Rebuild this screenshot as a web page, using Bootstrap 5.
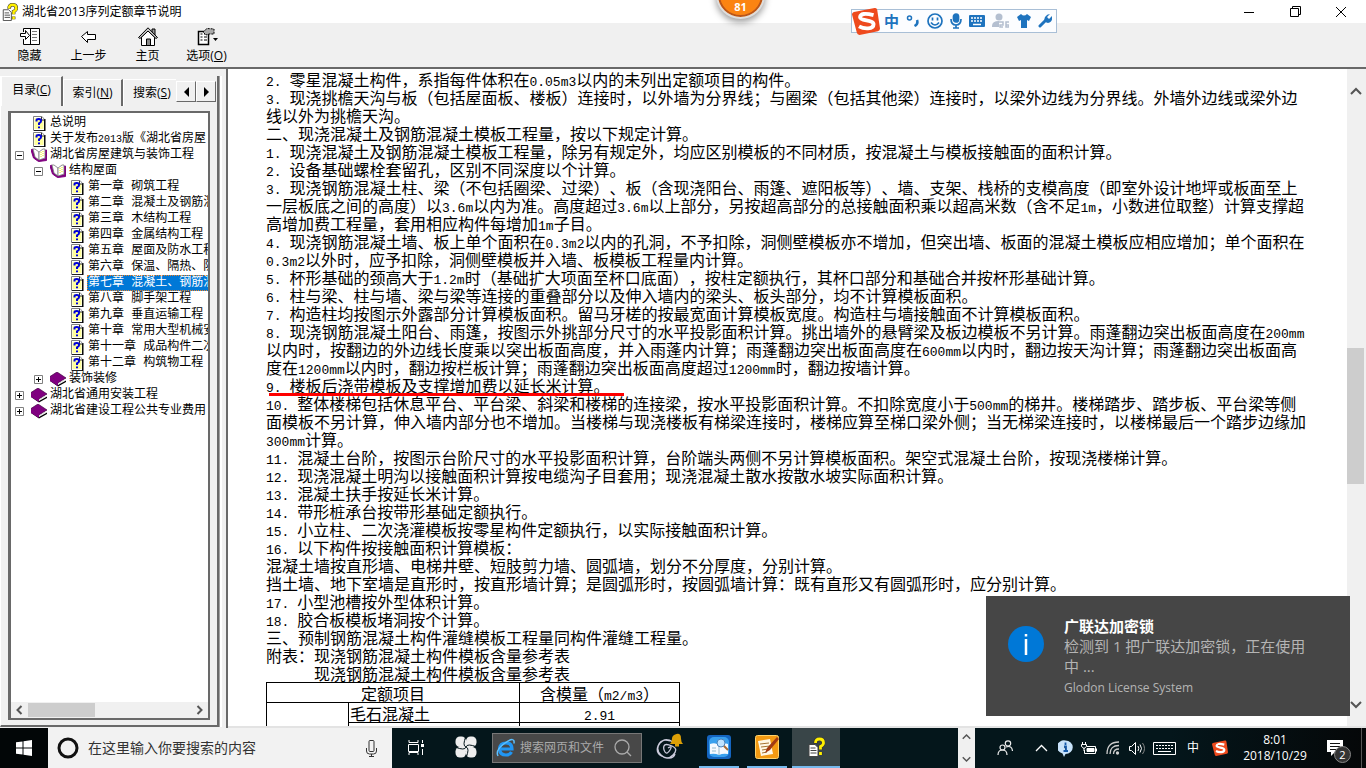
<!DOCTYPE html>
<html lang="zh-CN">
<head>
<meta charset="utf-8">
<meta name="viewport" content="width=device-width, initial-scale=1">
<title>湖北省2013序列定额章节说明</title>
<link href="https://cdn.jsdelivr.net/npm/bootstrap@5.3.0/dist/css/bootstrap.min.css" rel="stylesheet">
<style>
:root{--face:#f0f0f0;--edge:#696969;--ui:"Open Sans","Noto Sans CJK SC",sans-serif;--blue:#1e73be}
body{font:12px/16px var(--ui);color:#000;background:var(--face);text-spacing-trim:space-all}
button{border:0;background:none;padding:0;color:inherit;font:inherit}
svg{display:block;flex:none}
.titlebar{height:23px;background:#fff;padding:0 2px}
.win-ctl{width:46px;height:20px}
.toolbar{height:44px}
.tool{width:59px;gap:1px}
.main-area{border-top:2px solid var(--edge);min-height:0}
/* navigation pane */
.side{width:228px;padding:7px 4px 1px 0;border-right:2px solid var(--edge)}
.tab-frame{border-right:2px solid var(--edge);border-bottom:2px solid var(--edge);border-left:1px solid #fff;width:219px;min-height:0}
.tabs{height:30px}
.tab-btn{height:27px;border-top:1px solid #fff;border-left:1px solid #fff;border-right:2px solid var(--edge)}
.tab-btn.on{height:30px;width:62px}
.tab-2{width:60px}
.tab-3{width:53px;border-right:0;padding-left:9px;text-align:left;white-space:nowrap}
.spin{width:20px;height:21px;border:1px solid #fff;border-right-color:var(--edge);border-bottom-color:var(--edge)}
.tab-page{padding:5px 7px 5px 7px;min-height:0}
.tree-box{background:#fff;border:2px solid var(--edge);border-left-width:3px;min-height:0}
.tree{padding:2px 0 0;font:12px/16px "Liberation Mono","Noto Sans CJK SC",monospace}
.tree .n{font-size:10px;line-height:0}
.tree li{height:16px;white-space:nowrap;padding-left:4px}
.tree li.l2{padding-left:23px}
.tree li.l3{padding-left:42px}
.tree a{color:#000;text-decoration:none;padding-left:1px;margin-left:2px}
.tree a.sel{background:#0078d7;color:#fff;outline:1px dotted #f08020;outline-offset:-1px;flex-grow:1;height:16px}
.box9{width:9px;margin-right:7px}
.hbar{height:16px;background:var(--face)}
.hbar-thumb{width:67px;height:14px;background:#cdcdcd}
.split{width:4px;border-left:1px solid #a0a0a0;background:#fff}
/* document pane */
.doc{background:#fff;padding:1px 0 0 38px;min-width:0;font:16px/18px "Noto Sans CJK SC",sans-serif;white-space:nowrap}
.doc .n{font-family:"Liberation Mono",monospace;font-size:13px;line-height:0}
.doc p{margin:0}
.ind{padding-left:48px}
.redline{position:relative}
.redline::after{content:"";position:absolute;left:3px;width:355px;bottom:-2px;height:3px;background:#f00}
.quota{border-collapse:collapse;width:413px;table-layout:fixed}
.quota td,.quota th{border:1px solid #000;height:20px;padding:0 1px;font-weight:400;line-height:18px}
.c1{width:82px}.c2{width:171px}.c3{width:160px}
.vbar{width:17px;margin-right:2px;background:var(--face)}
.vbar button{height:43px}
.thumb-v{background:#cdcdcd}
.base-line{height:2px;background:#e3e3e3}
/* overlays */
.ball{position:absolute;left:716px;top:-29px;width:49px;height:48px;border-radius:50%;background:#fb8412;border:2px solid #ddd;outline:0;box-shadow:inset 0 0 0 2px #b9551a,0 3px 7px rgba(0,0,0,.4);color:#fff;font-weight:700;font-size:11px;padding-top:24px}
.ime{position:absolute;left:851px;top:9px;width:206px;height:24px;background:#fcfdff;border:1px solid #a9bfd6;color:var(--blue)}
.ime-zh{font-size:15px;font-weight:700}
.notice{position:absolute;right:16px;bottom:52px;width:364px;height:120px;background:#464646;color:#b4b4b4;font-size:15px;line-height:20px;padding:20px 32px 0 22px}
.notice small{font-size:12px}
/* taskbar */
.taskbar{height:40px;background:#04161b;color:#fff}
.w48{width:48px}.w52{width:52px}.w54{width:54px}.w46{width:46px}.w50{width:50px}
.w24{width:24px}.w30{width:30px}.w28{width:28px}.w26{width:26px}.w84{width:84px}.w40{width:40px}
.start{background:#020607}
.cortana{width:344px;background:#f2f2f2;padding:0 14px 0 9px}
.cortana input{border:0;background:none;outline:0;font-size:14px;padding:0 0 0 9px;min-width:0}
.cortana input::placeholder{color:#333;opacity:1}
.websearch{width:150px;height:30px;background:#484848;border:1px solid #777;padding:0 7px 0 3px}
.websearch input{border:0;background:none;outline:0;width:98px;padding:0 0 0 4px;font-size:12px;color:#fff}
.websearch input::placeholder{color:#aaa;opacity:1}
.task{height:40px;border-bottom:2px solid transparent;position:relative}
.run::after{content:"";position:absolute;left:3px;right:3px;bottom:-2px;height:2px;background:#76b9ed}
.run.w50::after{left:5px;right:5px}
.run.active-app{background:#394548}
.run.active-app::after{left:0;right:0}
.taskscroll{width:17px;background:var(--face)}
.tray{padding:0 4px 0 6px;background:linear-gradient(90deg,#04161b 50%,#050708)}
.peek{border-left:1px solid #555;height:40px}
.count{position:absolute;left:17px;top:18px;width:17px;height:17px;border-radius:50%;background:#333;border:1px solid #888;font-size:11px;line-height:15px}
</style>
</head>
<body class="vh-100 d-flex flex-column overflow-hidden position-relative">

<svg width="0" height="0" class="position-absolute" aria-hidden="true">
  <symbol id="help" viewBox="0 0 13 15"><path d="M1 .5h8.500l2.500 3v11H1z" fill="#fff" stroke="#808080"/><path d="M2 2h7v2h2v9H2z" fill="#ffff9c"/><path d="M12.300 3v12H1.500" fill="none" stroke="#000" stroke-width="1.400"/><path d="M9 1v3h3" fill="#fff" stroke="#000" stroke-width=".8"/><path d="M4 5.500V4.300Q4 3 6.300 3T8.600 5Q8.600 6.200 6.500 7.300V9M6.500 10.500v1.800" fill="none" stroke="#00d" stroke-width="2"/></symbol>
  <symbol id="open" viewBox="0 0 16 14"><path d="M0 2l2.500 8 5 3.500 8-1V2h-1v8.500l-6 1.500-4-3L1.500 1z" fill="#800080" stroke="#800080"/><path d="M2 1h2l4 3v8L4 9z" fill="#fff" stroke="#777" stroke-width=".8"/><path d="M8 4l4-3h2v9l-6 2z" fill="#fff" stroke="#777" stroke-width=".8"/><path d="M10 4v6M12 3v6" stroke="#ee0" stroke-dasharray="1"/></symbol>
  <symbol id="book" viewBox="0 0 16 15"><path d="M0 4.500L7 0l9 6-8 5z" fill="#800080" stroke="#400040" stroke-width=".7"/><path d="M0 5v4l8 5.500 8-4.500V8.500L8 13z" fill="#000"/><path d="M8 12l7-4.500" fill="none" stroke="#ddd"/><path d="M0 4.500L8 10v4L0 9z" fill="#800080"/></symbol>
  <symbol id="minus" viewBox="0 0 9 9"><path d="M.5.5h8v8h-8z" fill="#fff" stroke="#808080"/><path d="M2 4.500h5" stroke="#000"/></symbol>
  <symbol id="plus" viewBox="0 0 9 9"><path d="M.5.5h8v8h-8z" fill="#fff" stroke="#808080"/><path d="M2 4.500h5M4.500 2v5" stroke="#000"/></symbol>
  <symbol id="chm" viewBox="0 0 16 20"><path d="M.5 7.500h6l3 3v9h-9z" fill="#fff" stroke="#444"/><path d="M2 11h5M2 13.500h6M2 16h6" stroke="#444"/><path d="M7 6.500Q7 2 11 2t4 4Q15 8 12 9.500v3M12 15v3" fill="none" stroke="#333" stroke-width="4"/><path d="M7 6Q7 2 11 2t4 4Q15 8 12 9.500v3M12 15v3" fill="none" stroke="#ffef00" stroke-width="2.800"/></symbol>
  <symbol id="sogou" viewBox="0 0 26 26"><path d="M3 4.500L21 1q2-.3 2.400 1.500L26 20q0 2-2 2.500L7 26q-2 0-2.500-2L0 7q0-2 3-2.500z" fill="#ee4a1d"/><path d="M20 7.500Q8 4.500 7.500 9.500c0 3.500 12.500 2.500 12.500 6.500 0 5-9 4.500-13.500 2" fill="none" stroke="#fff" stroke-width="3.600"/></symbol>
  <symbol id="up" viewBox="0 0 12 8"><path d="M1 7l5-5 5 5" fill="none" stroke="#555" stroke-width="2"/></symbol>
  <symbol id="down" viewBox="0 0 12 8"><path d="M1 1l5 5 5-5" fill="none" stroke="#555" stroke-width="2"/></symbol>
</svg>

<header class="titlebar d-flex align-items-center flex-shrink-0">
  <svg width="16" height="18"><use href="#chm"/></svg>
  <span class="ps-1">湖北省2013序列定额章节说明</span>
  <div class="ms-auto d-flex">
    <button class="win-ctl d-flex justify-content-center align-items-center" aria-label="最小化"><svg width="10" height="10"><path d="M0 5.500h10" stroke="#000"/></svg></button>
    <button class="win-ctl d-flex justify-content-center align-items-center" aria-label="还原"><svg width="11" height="11" fill="none" stroke="#000"><path d="M.5 2.500h8v8h-8zM2.500 2.500v-2h8v8h-2"/></svg></button>
    <button class="win-ctl d-flex justify-content-center align-items-center" aria-label="关闭"><svg width="10" height="10" stroke="#000"><path d="M0 0l10 10M10 0L0 10"/></svg></button>
  </div>
</header>

<nav class="toolbar d-flex flex-shrink-0">
  <button class="tool d-flex flex-column align-items-center pt-1"><svg width="20" height="20" fill="#fff" stroke="#000"><path d="M3.500 5V1.500h16v16h-16V12"/><path d="M10.500 2v15"/><path d="M12 4.500h5M12 7.500h5M12 10.500h5M12 13.500h5" stroke="#777"/><path d="M.5 6.500h5v-3l4 5-4 4v-3h-5z"/></svg>隐藏</button>
  <button class="tool d-flex flex-column align-items-center pt-1"><svg width="20" height="20" fill="#fff" stroke="#000"><path d="M2.500 9.500l6-5v3h8v5h-8v3z"/></svg>上一步</button>
  <button class="tool d-flex flex-column align-items-center pt-1"><svg width="20" height="20" fill="#fff" stroke="#000"><path d="M3.500 10v8.500h13V10L10 4z"/><path d="M14 2h3v7l-3-3z" fill="#999"/><path d="M.5 10.500L10 .8l9.500 9.700-1.500 1L10 4l-8 7.500z" fill="#ccc"/><path d="M8.500 18v-6h4v6" fill="#888"/></svg>主页</button>
  <button class="tool d-flex flex-column align-items-center pt-1"><svg width="22" height="20" fill="#fff" stroke="#000"><path d="M2.500 4.500h10v13h-10z" stroke-width="1.500"/><path d="M4.500 7h2M8 7h3M4.500 10h2M8 10h3M4.500 13h2M8 13h3"/><path d="M7 5l4-3.500 7 .5v5h-5l-3 1z" fill="#aaa" stroke-dasharray="2 1"/><path d="M17 11h5l-2.500 3z" fill="#000" stroke="none"/></svg><span>选项(<u>O</u>)</span></button>
</nav>

<main class="main-area d-flex flex-grow-1">
  <aside class="side d-flex flex-shrink-0">
    <div class="tab-frame d-flex flex-column flex-shrink-0">
      <div class="tabs d-flex align-items-end flex-shrink-0" role="tablist">
        <button class="tab-btn on pb-1" role="tab" aria-selected="true">目录(<u>C</u>)</button>
        <button class="tab-btn tab-2" role="tab">索引(<u>N</u>)</button>
        <button class="tab-btn tab-3" role="tab">搜索(<u>S</u>)</button>
        <button class="spin d-flex align-items-center justify-content-center mb-1" aria-label="向左"><svg width="5" height="10"><path d="M5 0v10L0 5z"/></svg></button>
        <button class="spin d-flex align-items-center justify-content-center mb-1" aria-label="向右"><svg width="5" height="10"><path d="M0 0v10l5-5z"/></svg></button>
      </div>
      <div class="tab-page d-flex flex-grow-1">
        <div class="tree-box d-flex flex-column flex-grow-1 overflow-hidden">
          <ul class="tree list-unstyled m-0 flex-grow-1 overflow-hidden">
            <li class="d-flex align-items-center"><span class="box9"></span><svg width="16" height="15"><use href="#help"/></svg><a href="#">总说明</a></li>
            <li class="d-flex align-items-center"><span class="box9"></span><svg width="16" height="15"><use href="#help"/></svg><a href="#">关于发布<span class="n">2013</span>版《湖北省房屋</a></li>
            <li class="d-flex align-items-center"><svg class="box9" height="9"><use href="#minus"/></svg><svg width="16" height="14"><use href="#open"/></svg><a href="#">湖北省房屋建筑与装饰工程</a></li>
            <li class="l2 d-flex align-items-center"><svg class="box9" height="9"><use href="#minus"/></svg><svg width="16" height="14"><use href="#open"/></svg><a href="#">结构屋面</a></li>
            <li class="l3 d-flex align-items-center"><span class="box9 flex-shrink-0"></span><svg width="16" height="15"><use href="#help"/></svg><a href="#">第一章 砌筑工程</a></li>
            <li class="l3 d-flex align-items-center"><span class="box9 flex-shrink-0"></span><svg width="16" height="15"><use href="#help"/></svg><a href="#">第二章 混凝土及钢筋混</a></li>
            <li class="l3 d-flex align-items-center"><span class="box9 flex-shrink-0"></span><svg width="16" height="15"><use href="#help"/></svg><a href="#">第三章 木结构工程</a></li>
            <li class="l3 d-flex align-items-center"><span class="box9 flex-shrink-0"></span><svg width="16" height="15"><use href="#help"/></svg><a href="#">第四章 金属结构工程</a></li>
            <li class="l3 d-flex align-items-center"><span class="box9 flex-shrink-0"></span><svg width="16" height="15"><use href="#help"/></svg><a href="#">第五章 屋面及防水工程</a></li>
            <li class="l3 d-flex align-items-center"><span class="box9 flex-shrink-0"></span><svg width="16" height="15"><use href="#help"/></svg><a href="#">第六章 保温、隔热、防</a></li>
            <li class="l3 d-flex align-items-center"><span class="box9 flex-shrink-0"></span><svg width="16" height="15"><use href="#help"/></svg><a href="#" class="sel">第七章 混凝土、钢筋混</a></li>
            <li class="l3 d-flex align-items-center"><span class="box9 flex-shrink-0"></span><svg width="16" height="15"><use href="#help"/></svg><a href="#">第八章 脚手架工程</a></li>
            <li class="l3 d-flex align-items-center"><span class="box9 flex-shrink-0"></span><svg width="16" height="15"><use href="#help"/></svg><a href="#">第九章 垂直运输工程</a></li>
            <li class="l3 d-flex align-items-center"><span class="box9 flex-shrink-0"></span><svg width="16" height="15"><use href="#help"/></svg><a href="#">第十章 常用大型机械安</a></li>
            <li class="l3 d-flex align-items-center"><span class="box9 flex-shrink-0"></span><svg width="16" height="15"><use href="#help"/></svg><a href="#">第十一章 成品构件二次</a></li>
            <li class="l3 d-flex align-items-center"><span class="box9 flex-shrink-0"></span><svg width="16" height="15"><use href="#help"/></svg><a href="#">第十二章 构筑物工程</a></li>
            <li class="l2 d-flex align-items-center"><svg class="box9" height="9"><use href="#plus"/></svg><svg width="16" height="15"><use href="#book"/></svg><a href="#">装饰装修</a></li>
            <li class="d-flex align-items-center"><svg class="box9" height="9"><use href="#plus"/></svg><svg width="16" height="15"><use href="#book"/></svg><a href="#">湖北省通用安装工程</a></li>
            <li class="d-flex align-items-center"><svg class="box9" height="9"><use href="#plus"/></svg><svg width="16" height="15"><use href="#book"/></svg><a href="#">湖北省建设工程公共专业费用</a></li>
          </ul>
          <div class="hbar d-flex align-items-center flex-shrink-0">
            <button class="px-1" aria-label="向左滚动"><svg width="9" height="10"><path d="M6.500 1l-4 4 4 4" fill="none" stroke="#555" stroke-width="2"/></svg></button>
            <div class="hbar-thumb"></div>
            <button class="px-1 ms-auto" aria-label="向右滚动"><svg width="9" height="10"><path d="M2.500 1l4 4-4 4" fill="none" stroke="#555" stroke-width="2"/></svg></button>
          </div>
        </div>
      </div>
    </div>
    <div class="split ms-auto"></div>
  </aside>

  <div class="d-flex flex-column flex-grow-1 overflow-hidden">
    <div class="d-flex flex-grow-1 overflow-hidden">
      <article class="doc flex-grow-1 overflow-hidden">
        <p><span class="n">2. </span>零星混凝土构件，系指每件体积在<span class="n">0.05m3</span>以内的未列出定额项目的构件。</p>
        <p><span class="n">3. </span>现浇挑檐天沟与板（包括屋面板、楼板）连接时，以外墙为分界线；与圈梁（包括其他梁）连接时，以梁外边线为分界线。外墙外边线或梁外边<br>线以外为挑檐天沟。</p>
        <p>二、现浇混凝土及钢筋混凝土模板工程量，按以下规定计算。</p>
        <p><span class="n">1. </span>现浇混凝土及钢筋混凝土模板工程量，除另有规定外，均应区别模板的不同材质，按混凝土与模板接触面的面积计算。</p>
        <p><span class="n">2. </span>设备基础螺栓套留孔，区别不同深度以个计算。</p>
        <p><span class="n">3. </span>现浇钢筋混凝土柱、梁（不包括圈梁、过梁）、板（含现浇阳台、雨篷、遮阳板等）、墙、支架、栈桥的支模高度（即室外设计地坪或板面至上<br>一层板底之间的高度）以<span class="n">3.6m</span>以内为准。高度超过<span class="n">3.6m</span>以上部分，另按超高部分的总接触面积乘以超高米数（含不足<span class="n">1m</span>，小数进位取整）计算支撑超<br>高增加费工程量，套用相应构件每增加<span class="n">1m</span>子目。</p>
        <p><span class="n">4. </span>现浇钢筋混凝土墙、板上单个面积在<span class="n">0.3m2</span>以内的孔洞，不予扣除，洞侧壁模板亦不增加，但突出墙、板面的混凝土模板应相应增加；单个面积在<br><span class="n">0.3m2</span>以外时，应予扣除，洞侧壁模板并入墙、板模板工程量内计算。</p>
        <p><span class="n">5. </span>杯形基础的颈高大于<span class="n">1.2m</span>时（基础扩大项面至杯口底面），按柱定额执行，其杯口部分和基础合并按杯形基础计算。</p>
        <p><span class="n">6. </span>柱与梁、柱与墙、梁与梁等连接的重叠部分以及伸入墙内的梁头、板头部分，均不计算模板面积。</p>
        <p><span class="n">7. </span>构造柱均按图示外露部分计算模板面积。留马牙槎的按最宽面计算模板宽度。构造柱与墙接触面不计算模板面积。</p>
        <p><span class="n">8. </span>现浇钢筋混凝土阳台、雨篷，按图示外挑部分尺寸的水平投影面积计算。挑出墙外的悬臂梁及板边模板不另计算。雨蓬翻边突出板面高度在<span class="n">200mm</span><br>以内时，按翻边的外边线长度乘以突出板面高度，并入雨蓬内计算；雨蓬翻边突出板面高度在<span class="n">600mm</span>以内时，翻边按天沟计算；雨蓬翻边突出板面高<br>度在<span class="n">1200mm</span>以内时，翻边按栏板计算；雨蓬翻边突出板面高度超过<span class="n">1200mm</span>时，翻边按墙计算。</p>
        <p class="redline"><span class="n">9. </span>楼板后浇带模板及支撑增加费以延长米计算。</p>
        <p><span class="n">10. </span>整体楼梯包括休息平台、平台梁、斜梁和楼梯的连接梁，按水平投影面积计算。不扣除宽度小于<span class="n">500mm</span>的梯井。楼梯踏步、踏步板、平台梁等侧<br>面模板不另计算，伸入墙内部分也不增加。当楼梯与现浇楼板有梯梁连接时，楼梯应算至梯口梁外侧；当无梯梁连接时，以楼梯最后一个踏步边缘加<br><span class="n">300mm</span>计算。</p>
        <p><span class="n">11. </span>混凝土台阶，按图示台阶尺寸的水平投影面积计算，台阶端头两侧不另计算模板面积。架空式混凝土台阶，按现浇楼梯计算。</p>
        <p><span class="n">12. </span>现浇混凝土明沟以接触面积计算按电缆沟子目套用；现浇混凝土散水按散水坡实际面积计算。</p>
        <p><span class="n">13. </span>混凝土扶手按延长米计算。</p>
        <p><span class="n">14. </span>带形桩承台按带形基础定额执行。</p>
        <p><span class="n">15. </span>小立柱、二次浇灌模板按零星构件定额执行，以实际接触面积计算。</p>
        <p><span class="n">16. </span>以下构件按接触面积计算模板：</p>
        <p>混凝土墙按直形墙、电梯井壁、短肢剪力墙、圆弧墙，划分不分厚度，分别计算。</p>
        <p>挡土墙、地下室墙是直形时，按直形墙计算；是圆弧形时，按圆弧墙计算：既有直形又有圆弧形时，应分别计算。</p>
        <p><span class="n">17. </span>小型池槽按外型体积计算。</p>
        <p><span class="n">18. </span>胶合板模板堵洞按个计算。</p>
        <p>三、预制钢筋混凝土构件灌缝模板工程量同构件灌缝工程量。</p>
        <p>附表：现浇钢筋混凝土构件模板含量参考表</p>
        <p class="ind">现浇钢筋混凝土构件模板含量参考表</p>
        <table class="quota">
          <colgroup><col class="c1"><col class="c2"><col class="c3"></colgroup>
          <tr><th colspan="2" class="text-center">定额项目</th><th class="text-center">含模量（<span class="n">m2/m3</span>）</th></tr>
          <tr><td rowspan="2"></td><td>毛石混凝土</td><td class="text-center"><span class="n">2.91</span></td></tr>
          <tr><td>无筋混凝土</td><td></td></tr>
        </table>
      </article>
      <div class="vbar d-flex flex-column flex-shrink-0">
        <button class="d-flex justify-content-center align-items-center" aria-label="向上滚动"><svg width="12" height="8"><use href="#up"/></svg></button>
        <div style="flex:236"></div><div class="thumb-v" style="flex:136"></div><div style="flex:199"></div>
        <button class="d-flex justify-content-center align-items-center" aria-label="向下滚动"><svg width="12" height="8"><use href="#down"/></svg></button>
      </div>
    </div>
    <div class="base-line flex-shrink-0"></div>
  </div>
</main>

<footer class="taskbar d-flex flex-shrink-0">
  <button class="start w48 d-flex align-items-center justify-content-center" aria-label="开始"><svg width="16" height="16" fill="#fff"><path d="M0 2.300L6.500 1.400v6.100H0zM7.500 1.200L16 0v7.500H7.500zM0 8.500h6.500v6.100L0 13.700zM7.500 8.500H16V16l-8.500-1.200z"/></svg></button>
  <div class="cortana d-flex align-items-center">
    <svg width="22" height="22"><circle cx="11" cy="11" r="9" fill="none" stroke="#111" stroke-width="3"/></svg>
    <input class="flex-grow-1" type="text" aria-label="搜索" placeholder="在这里输入你要搜索的内容">
    <svg width="13" height="17" fill="none" stroke="#333"><rect x="4" y=".5" width="5" height="11" rx="1"/><path d="M1.500 8v3q0 3 3 3h4q3 0 3-3V8M6.500 14v2.500M4 16.500h5"/></svg>
  </div>
  <div class="d-flex align-items-center flex-grow-1">
    <button class="task w48 d-flex align-items-center justify-content-center" aria-label="任务视图"><svg width="17" height="15" fill="none" stroke="#fff"><path d="M.5 4.500h10v7H.5zM1 0v2.500h9V0M1 15v-2.500h9V15M14.500 0v3M14.500 9v6"/><path d="M13 4h3v3h-3z" fill="#fff" stroke="none"/></svg></button>
    <button class="task w52 d-flex align-items-center justify-content-center" aria-label="风扇"><svg width="22" height="22"><g fill="#eee"><rect x=".5" y=".5" width="10.500" height="10.500" rx="4.500"/><rect x="11" y=".5" width="10.500" height="10.500" rx="4.500"/><rect x=".5" y="11" width="10.500" height="10.500" rx="4.500"/><rect x="11" y="11" width="10.500" height="10.500" rx="4.500"/><rect x="7" y="7" width="8" height="8"/></g><path d="M11 11Q7 10 11 0M11 11Q12 7 22 11M11 11Q15 12 11 22M11 11Q10 15 0 11" fill="none" stroke="#04161b"/></svg></button>
    <div class="websearch d-flex align-items-center flex-shrink-0">
      <svg width="20" height="20"><path d="M3.500 11h12.500Q16 5 10 5T3.500 11Q4 17 10 17q4 0 5.500-3" fill="none" stroke="#2196f3" stroke-width="3.200"/><path d="M2 18Q-1 12 9 5t9 .5" fill="none" stroke="#5cc0ff" stroke-width="1.500"/></svg>
      <input type="text" aria-label="搜索网页和文件" placeholder="搜索网页和文件">
      <svg width="18" height="18" fill="none" stroke="#aaa" stroke-width="1.300"><circle cx="8" cy="8" r="7"/><path d="M13 13l4 4"/></svg>
    </div>
    <button class="task w54 d-flex align-items-center justify-content-center" aria-label="浏览器"><svg width="27" height="28"><path d="M17 9Q9 4 4 10T5 22t12 0-1-9-8 0 1 6 5-2-2-2M14 8Q5 5 2 13t6 11 11-3" fill="none" stroke="#ccd" stroke-width="1.300"/><path d="M14 11q2-2 2-5.500T20.500 1 25 5.500q0 3.500 2 5.500zM19 11h4v2.500h-4z" fill="#dda007"/></svg></button>
    <button class="task run w46 d-flex align-items-center justify-content-center" aria-label="阅读器"><svg width="24" height="24"><rect width="24" height="24" rx="3" fill="#1565c0"/><rect x="2" y="2" width="20" height="20" rx="5" fill="#39a0ee"/><path d="M3 9q5-2 9 1 4-3 9-1v10q-5-1-9 1-4-2-9-1z" fill="#f5f9ff"/><path d="M12 10v10M5 13h4M5 16h4" stroke="#9bc"/><circle cx="14" cy="8" r="4" fill="#bfe3ff" stroke="#4b83bb"/><path d="M17 11l4 4" stroke="#a76b35" stroke-width="2"/></svg></button>
    <button class="task run w50 d-flex align-items-center justify-content-center" aria-label="记事"><svg width="24" height="24"><rect x=".5" y=".5" width="23" height="23" rx="2" fill="#f39a12" stroke="#ffd36b"/><path d="M3 6l12-2 3 15-12 2z" fill="#fff8e6"/><path d="M5 9l9-1M6 12l9-1M7 15l6-1M7 18l5-1" stroke="#a67434"/><path d="M22 2L12 13l-2 5 5-3L24 4z" fill="#a23b12"/></svg></button>
    <button class="task run active-app w48 d-flex align-items-center justify-content-center" aria-label="帮助"><svg width="17" height="20"><use href="#chm"/></svg></button>
  </div>
  <div class="taskscroll d-flex flex-column align-items-center justify-content-between py-1 flex-shrink-0">
    <button aria-label="上一行"><svg width="9" height="9"><use href="#up"/></svg></button>
    <button aria-label="下一行"><svg width="9" height="9"><use href="#down"/></svg></button>
  </div>
  <div class="tray d-flex align-items-center flex-shrink-0">
    <button class="w48 d-flex justify-content-center" aria-label="人脉"><svg width="16" height="16" fill="none" stroke="#eee" stroke-width="1.200"><circle cx="5.500" cy="7.500" r="2.500"/><path d="M1 15q0-5 4.500-5t4.500 5"/><circle cx="11" cy="3.500" r="2.700"/><path d="M9 7q6-2 6.500 4"/></svg></button>
    <button class="w24 d-flex justify-content-center" aria-label="显示隐藏的图标"><svg width="13" height="8" fill="none" stroke="#fff" stroke-width="1.300"><path d="M1 7l5.500-5.500L12 7"/></svg></button>
    <button class="w24 d-flex justify-content-center" aria-label="信息"><svg width="15" height="17"><path d="M7.500.5a7 6.500 0 1 1 0 13.500L6 17l-1.500-3.500A7 6.500 0 0 1 7.500.5z" fill="#c8e2fa"/><path d="M7.500 2.500v2.500M6 6.500h2v4.500M5.500 11h4.500" stroke="#1458a8" stroke-width="1.800"/></svg></button>
    <button class="w24 d-flex justify-content-center" aria-label="电池"><svg width="17" height="13" fill="none" stroke="#fff"><path d="M6 4.500h8.500v7h-11V8M15.500 6.500v3"/><path d="M6 6.500h7v3H6z" fill="#fff"/><path d="M.5 2.500h5v2l-2.500 2-2.500-2zM1.500 0v2M4.500 0v2M3 6v3"/></svg></button>
    <button class="w24 d-flex justify-content-center" aria-label="网络"><svg width="14" height="14" fill="none" stroke="#ccc" stroke-width="1.300"><path d="M1 13Q1 1 13 1M4 13q0-8.500 9-8.500M7.500 13q0-5 5.500-5"/><circle cx="11.500" cy="12" r="1" fill="#fff"/></svg></button>
    <button class="w24 d-flex justify-content-center" aria-label="音量"><svg width="17" height="13" fill="none" stroke="#fff"><path d="M.5 4.500h2l4-4v12l-4-4h-2zM9 4q1.500 2.500 0 5M11 2.500q3 4 0 8"/><path d="M13.500 1q4 5.500 0 11" stroke="#888"/></svg></button>
    <button class="w30 d-flex justify-content-center" aria-label="触摸键盘"><svg width="23" height="13" fill="none" stroke="#fff"><path d="M.5.500h22v12H.5z"/><path d="M3 3.500h17M3 6.500h17" stroke-dasharray="2 1"/><path d="M5 9.500h13"/></svg></button>
    <button class="w28">中</button>
    <button class="w26 d-flex justify-content-center" aria-label="搜狗输入法"><svg width="16" height="16"><use href="#sogou"/></svg></button>
    <div class="w84 text-center">8:01<br>2018/10/29</div>
    <button class="w40 position-relative" aria-label="操作中心"><svg class="mx-1" width="30" height="40"><path d="M6 12h16v12H14l-4 4v-4H6z" fill="#fff"/><path d="M9 15.500h10M9 18.500h10M9 21.500h6" stroke="#111"/></svg><span class="count">2</span></button>
    <div class="peek ms-1"></div>
  </div>
</footer>

<button class="ball" aria-label="加速球 81">81</button>
<div class="ime d-flex align-items-center">
  <svg width="28" height="28"><use href="#sogou"/></svg>
  <div class="d-flex align-items-center justify-content-between flex-grow-1 ps-1 pe-1">
    <button class="ime-zh">中</button>
    <button aria-label="标点"><svg width="13" height="14" fill="none" stroke="#1e73be"><circle cx="3.500" cy="4" r="2" stroke-width="1.500"/><path d="M11 6q1.500 4-2.500 6" stroke-width="2.500"/></svg></button>
    <button aria-label="表情"><svg width="16" height="16" fill="none" stroke="#1e73be" stroke-width="1.700"><circle cx="8" cy="8" r="7"/><path d="M5.500 4.500v3M10.500 4.500v3M4 9.500q4 5 8 0"/></svg></button>
    <button aria-label="语音"><svg width="12" height="16" fill="none" stroke="#1e73be" stroke-width="1.700"><rect x="3.500" y="1" width="5" height="8" rx="2.500" fill="#1e73be"/><path d="M1 6q0 6 5 6t5-6M6 12v3M3 15h6"/></svg></button>
    <button aria-label="软键盘"><svg width="16" height="12"><rect width="16" height="12" rx="1" fill="#1e73be"/><path d="M2 3h12M2 6h12" stroke="#fff" stroke-width="1.500" stroke-dasharray="2 1"/><path d="M4 9.500h8" stroke="#fff" stroke-width="1.500"/></svg></button>
    <button aria-label="账户"><svg width="17" height="16" fill="#b4bfd0"><circle cx="7" cy="4" r="3.500"/><path d="M0 13q0-5 7-5v6H0z"/><path d="M7 9h4v3H8v2h3M17 9h-3v5h3v-2h-3" fill="#fff" stroke="#b4bfd0" stroke-width="1.500"/></svg></button>
    <button aria-label="皮肤"><svg width="14" height="14" fill="#1e73be"><path d="M4 0q3 3 6 0l4 3-2 4-2-1v8H4V6L2 7 0 3z"/></svg></button>
    <button aria-label="设置"><svg width="14" height="14"><path d="M2 12l6-6" stroke="#1e73be" stroke-width="3" stroke-linecap="round"/><path d="M12 0L9 3l2 2 3-3q1 6-4 7-5-1-3-6 2-3 5-3z" fill="#1e73be"/></svg></button>
  </div>
</div>

<div class="notice d-flex" role="alert">
  <svg class="mt-2 me-3" width="36" height="40"><circle cx="18" cy="20" r="18" fill="#0078d7"/><path d="M18 10v2.500M18 15v16" stroke="#fff" stroke-width="2.500"/></svg>
  <div class="ps-1"><strong class="text-white d-block">广联达加密锁</strong>检测到 1 把广联达加密锁，正在使用<br>中 ...<br><small>Glodon License System</small></div>
</div>

<script src="https://cdn.jsdelivr.net/npm/bootstrap@5.3.0/dist/js/bootstrap.bundle.min.js"></script>
</body>
</html>
